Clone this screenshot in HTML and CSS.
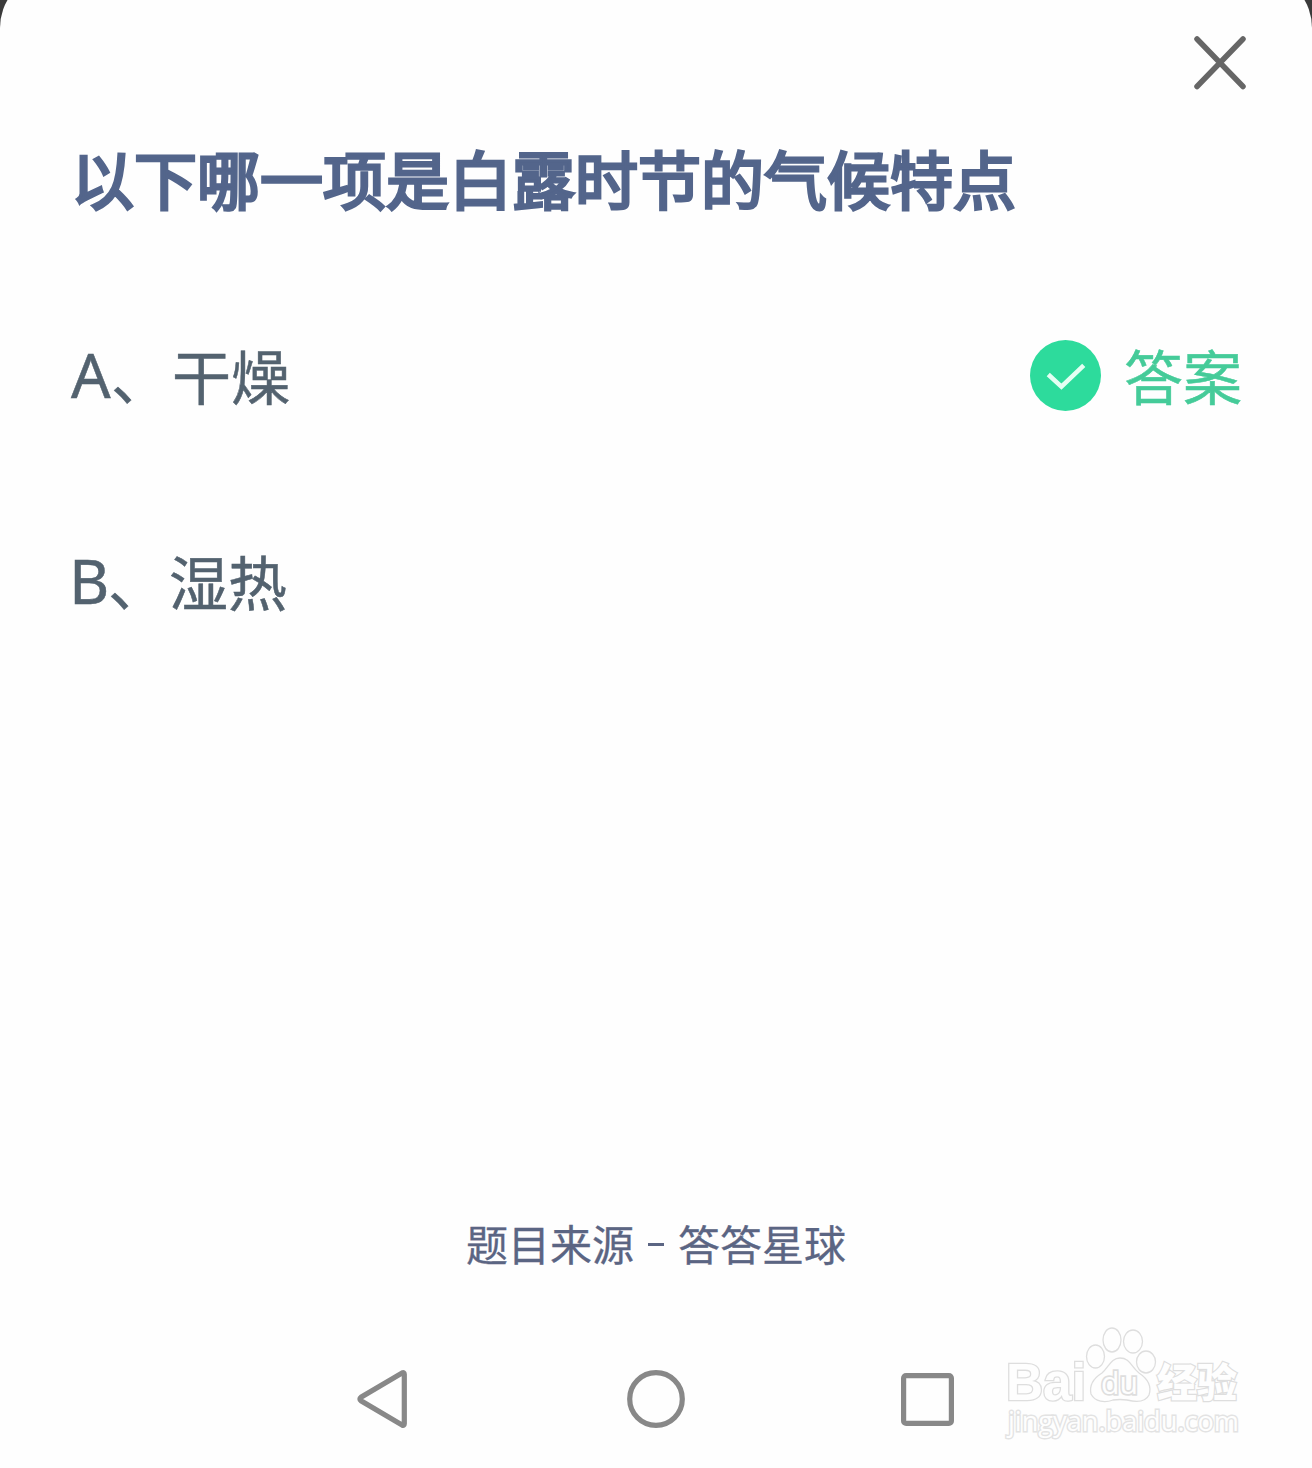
FILE: index.html
```
<!DOCTYPE html>
<html lang="zh-CN">
<head>
<meta charset="utf-8">
<title>答题</title>
<link rel="stylesheet" href="styles.css">
</head>
<body>
<main class="sheet">
  <header class="top">
    <svg class="close" viewBox="0 0 52 54"><path d="M3 3 49 50.500M49 3 3 50.500"/></svg>
  </header>
  <h1 class="question">以下哪一项是白露时节的气候特点</h1>
  <section class="options">
    <div class="option">
      <span class="letter letter-a">A</span><span class="mark">、</span><span class="label">干燥</span>
      <span class="answer">
        <svg class="tick" viewBox="0 0 70 70"><circle cx="35" cy="35" r="35"/><path d="M18 34 31 46 53 25"/></svg>
        <span>答案</span>
      </span>
    </div>
    <div class="option">
      <span class="letter letter-b">B</span><span class="mark">、</span><span class="label">湿热</span>
    </div>
  </section>
  <footer class="source"><span>题目来源</span><span class="dash"></span><span>答答星球</span></footer>
  <nav class="nav">
    <svg class="back" viewBox="0 0 50 58"><path d="M47.3 4.2Q47.3 2 45 3L4 27.2Q1.8 29 4 30.8L45 55Q47.3 56 47.3 53.8Z"/></svg>
    <svg class="home" viewBox="0 0 58 58"><circle cx="29" cy="29" r="26.3"/></svg>
    <svg class="recent" viewBox="0 0 53 53"><rect x="2.6" y="2.6" width="47.8" height="47.8" rx="2.5"/></svg>
  </nav>
  <svg class="watermark" viewBox="990 1310 270 150">
    <g class="wm-line">
      <text class="wm-latin" x="1006" y="1400" textLength="80" lengthAdjust="spacingAndGlyphs">Bai</text>
      <ellipse cx="1095.500" cy="1356.500" rx="9" ry="11.500"/>
      <ellipse cx="1112" cy="1340" rx="9" ry="12"/>
      <ellipse cx="1133" cy="1341.500" rx="9.500" ry="11.500"/>
      <ellipse cx="1146" cy="1362" rx="9.500" ry="11"/>
      <path d="M1120 1358C1130 1358 1131 1367 1139 1373C1148 1379 1152 1386 1149 1395C1145 1403 1135 1402 1127 1400Q1120 1399 1113 1400C1105 1403 1095 1402 1091 1394C1089 1385 1094 1378 1102 1373C1109 1367 1111 1358 1120 1358Z"/>
      <text class="wm-du" x="1101" y="1394" textLength="37" lengthAdjust="spacingAndGlyphs">du</text>
      <text class="wm-cjk" x="1157" y="1397" textLength="80" lengthAdjust="spacingAndGlyphs">经验</text>
      <text class="wm-url" x="1008" y="1431" textLength="231" lengthAdjust="spacingAndGlyphs">jingyan.baidu.com</text>
    </g>
  </svg>
</main>
</body>
</html>
```
FILE: styles.css
```
* { box-sizing: border-box; }
body {
  margin: 0;
  height: 1468px;
  overflow: hidden;
  display: flex;
  flex-direction: column;
  justify-content: flex-end;
  background: #3b3b3b;
  font-family: "Noto Sans CJK SC", sans-serif;
}
.sheet {
  position: relative;
  display: flex;
  flex-direction: column;
  flex: none;
  height: 1488px;
  padding-top: 20px;
  background: #fefefe;
  border-radius: 40px 40px 0 0 / 48px 48px 0 0;
}
svg { display: block; fill: none; }
.top {
  display: flex;
  justify-content: flex-end;
  height: 127px;
  padding: 36px 66px 0 0;
}
.close { width: 52px; height: 54px; stroke: #666; stroke-width: 5.5; stroke-linecap: round; }
.question {
  margin: 0;
  height: 144px;
  padding-left: 71px;
  font-size: 63px;
  line-height: 100px;
  font-weight: 400;
  -webkit-text-stroke: 3.1px #53658b;
  color: #53658b;
  white-space: nowrap;
}
.options { display: flex; flex-direction: column; gap: 106px; height: 923px; padding: 54px 70px 0; }
.option {
  display: flex;
  align-items: center;
  height: 100px;
  font-size: 59px;
  line-height: 100px;
  color: #53626f;
  -webkit-text-stroke: 0.5px currentColor;
}
.letter { font-family: "Noto Sans", sans-serif; font-size: 62px; line-height: 98px; padding-bottom: 2px; padding-left: 1px; width: 41px; }
.letter-b { width: 39px; padding-left: 0; margin-left: -1px; }
.mark { width: 61px; }
.answer {
  display: flex;
  align-items: center;
  gap: 23px;
  margin-left: auto;
  color: #45cb99;
}
.tick { width: 71px; height: 71px; }
.tick circle { fill: #2ddb9c; }
.tick path { stroke: #e4fff3; stroke-width: 4.5; }
.source {
  display: flex;
  justify-content: center;
  align-items: center;
  height: 98px;
  font-size: 42px;
  line-height: 60px;
  color: #5b6583;
  -webkit-text-stroke: 0.3px currentColor;
}
.dash { width: 16px; height: 3px; margin: 2px 14px 0; background: currentColor; }
.nav { display: flex; align-items: center; height: 100px; margin-top: 57px; padding-left: 357px; stroke: #888; stroke-width: 5.2; }
.back { width: 50px; height: 58px; }
.home { width: 58px; height: 58px; margin-left: 220px; }
.recent { width: 53px; height: 53px; margin-left: 216px; }
.watermark { position: absolute; right: 52px; bottom: 8px; width: 270px; height: 150px; }
.wm-line { fill: #fefefe; stroke: #dedede; stroke-width: 1.3; }
.wm-latin { font: 700 51px "Liberation Sans", sans-serif; stroke-width: 2.6; paint-order: stroke; }
.wm-du { font: 400 31px "Open Sans", sans-serif; stroke-width: 3.5; paint-order: stroke; }
.wm-cjk { font: 900 40px "Noto Sans CJK SC", sans-serif; stroke-width: 2.5; paint-order: stroke; }
.wm-url { font: 400 27px "Open Sans", sans-serif; stroke: #e3e3e3; stroke-width: 2.8; paint-order: stroke; }
```
